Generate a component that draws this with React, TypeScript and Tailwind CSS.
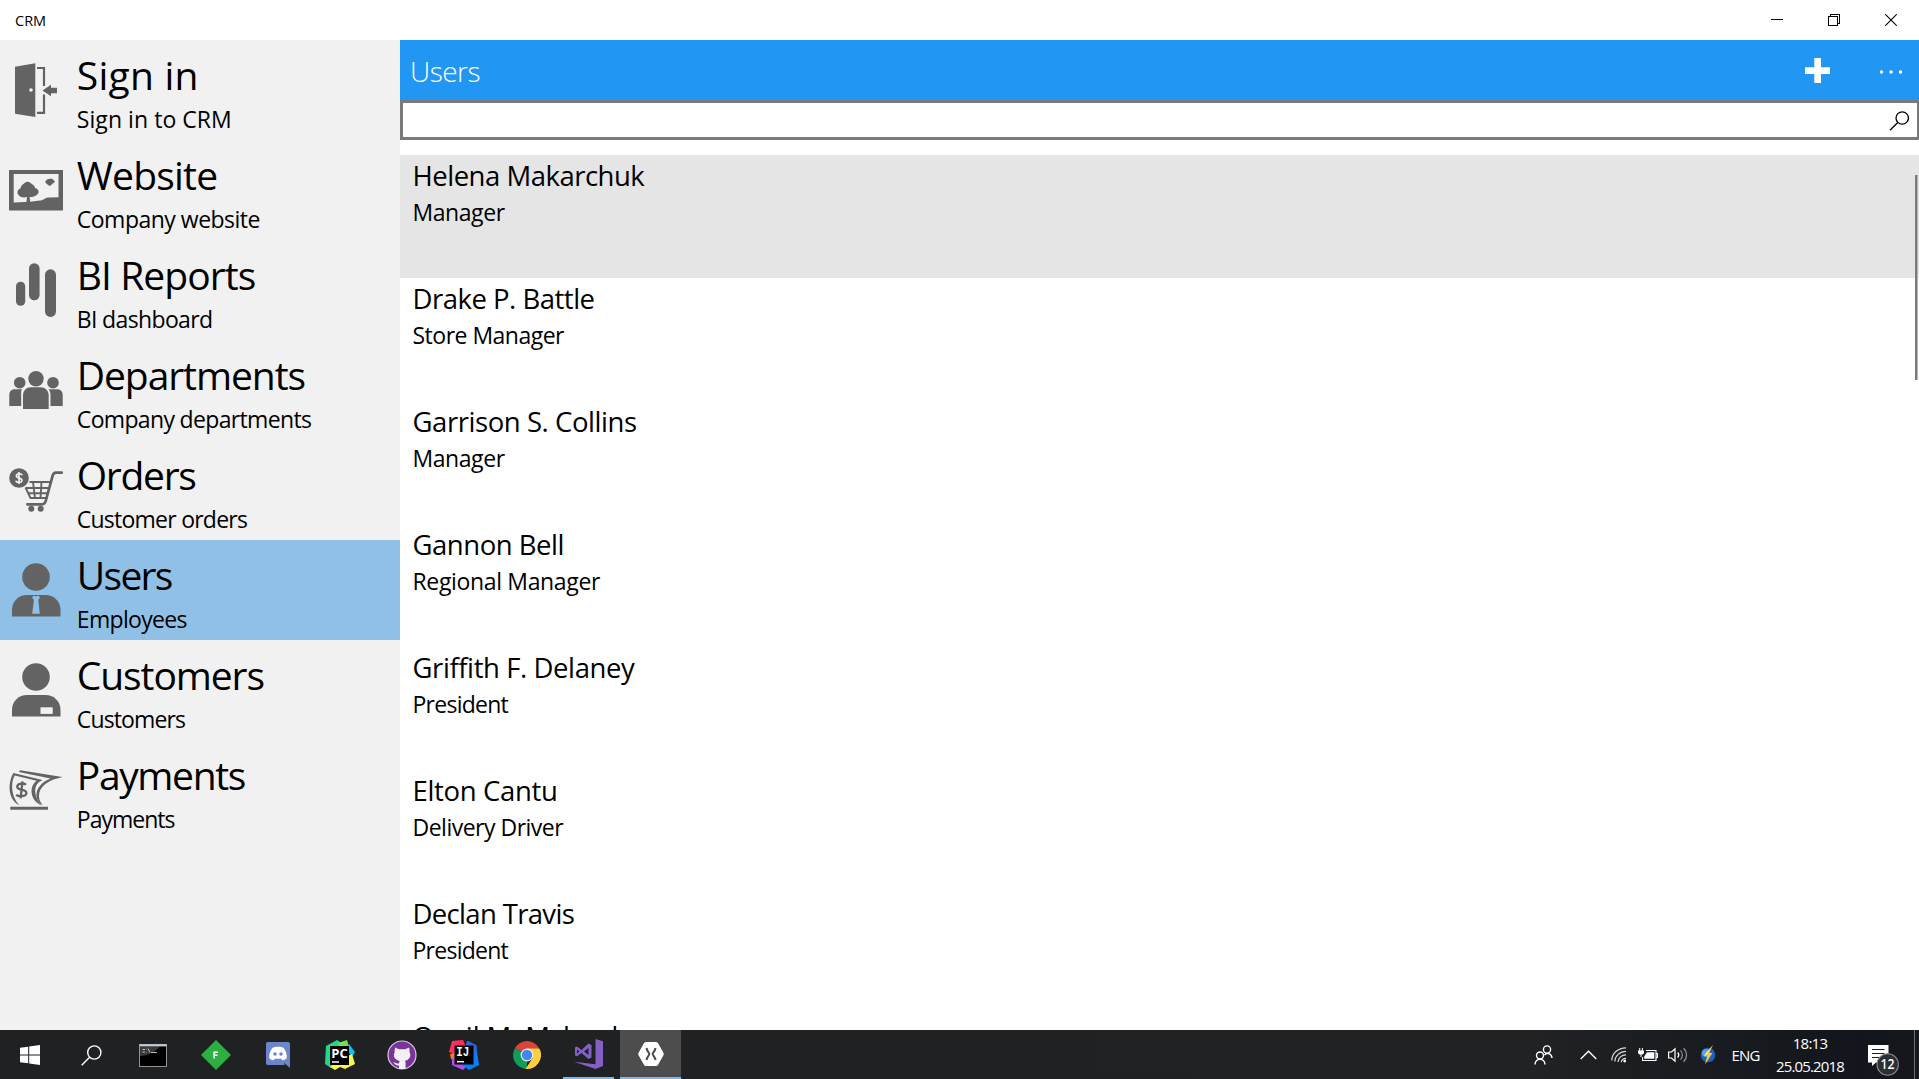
import React from 'react';

type IconProps = { children: React.ReactNode };

function NavIcon({ children }: IconProps) {
  return (
    <svg viewBox="9 23 54 54" className="mt-[23px] ml-[9px] h-[54px] w-[54px] shrink-0 fill-[#636363]">
      {children}
    </svg>
  );
}

const personHead = <circle cx="36" cy="37" r="13.8" />;
const personBody = 'M12 76.5V70C12 61 19 55 27 55H45.5C53.5 55 60.5 61 60.5 70V76.5Z';

const signIn = (
  <NavIcon>
    <path d="M15 26.8 35.3 23.3V77L15 73.8Z" />
    <circle cx="31" cy="50" r="1.8" fill="#f1f1f1" />
    <path d="M37 28H44V46M44 54.5V72.8H37" fill="none" stroke="#636363" strokeWidth="2.2" />
    <path d="M42.5 50.5 51 44.8V47.8H57V53.3H51V56.2Z" />
  </NavIcon>
);

const website = (
  <NavIcon>
    <path d="M9 30H63V70.5H9Z" />
    <path d="M13.7 34H58.5V57.3L49 57.6C45.5 57.7 45 59 42 60.3L30 61.8 13.7 62.5Z" fill="#f1f1f1" />
    <path d="M26.3 63 27 57C23.5 58.3 18.5 56.8 17.5 53.2 17 50.5 19 48.8 20.7 48.3 20.7 45 23.8 44.3 24.8 42.8 26.3 41.4 29 41.4 30.3 42.8 31.5 44.3 35 45.3 35 48 37 48.5 39 50 38.6 52.3 37.8 55.5 33 57.5 29.7 57L30.2 63Z" />
    <path d="M50 46C48 45 46 43.8 45 41.8 46.5 41 46.5 38.8 49 39 50 38.5 53 38.3 53.5 40.2 55 40.6 55.3 41.5 54 42.8 52.5 43.3 51.8 45 50 46Z" />
  </NavIcon>
);

const reports = (
  <NavIcon>
    <rect x="16" y="41.7" width="9.2" height="24" rx="4.5" />
    <rect x="29" y="23.2" width="10.6" height="37" rx="5.2" />
    <rect x="45" y="29.3" width="11" height="47.6" rx="5.4" />
  </NavIcon>
);

const departments = (
  <NavIcon>
    <circle cx="36" cy="38.7" r="7.7" />
    <circle cx="19.7" cy="42.7" r="5.8" />
    <circle cx="53" cy="42.7" r="5.8" />
    <path d="M23 69V55.5C23 50.5 26.5 47.3 31 47.3H40.5C45 47.3 48.7 50.5 48.7 55.5V69Z" />
    <path d="M9.3 66V54.5C9.5 51 12 49.3 15 49.3H22C20.8 51.5 21.2 53 21.2 56V66ZM62.7 66V54.5C62.5 51 60 49.3 57 49.3H48.5C50.3 51.5 50.5 53 50.5 56V66Z" />
  </NavIcon>
);

const orders = (
  <NavIcon>
    <circle cx="19" cy="38" r="9.8" />
    <path d="M22.3 35.2C21.6 33.4 16.6 33 16.4 35.7 16.2 38.7 22 37.2 21.9 40.5 21.7 43.2 16.5 43 15.7 40.8M19 32V44" fill="none" stroke="#f1f1f1" strokeWidth="1.7" />
    <path d="M61.8 32.6H56C54 32.6 53.2 33.8 52.7 35.5L46 60C45.3 63 44.3 64.3 42 64.3H27.3" fill="none" stroke="#636363" strokeWidth="2.7" strokeLinecap="round" />
    <path d="M29.5 42H50.5M25.5 48H49M28 53.3H47.5M30 58H46.5M25.5 47.5 30.5 58M33 42 35 58M41.5 42 40.5 58" fill="none" stroke="#636363" strokeWidth="1.9" />
    <circle cx="31.3" cy="68.8" r="3" />
    <circle cx="40.7" cy="68.8" r="3" />
  </NavIcon>
);

const users = (
  <NavIcon>
    {personHead}
    <path d={personBody} />
    <path d="M32 57.5 34 55.5 36 56.5 38.2 55.5 40 57.5 38.3 60 39.8 73.8H32.2L33.9 60Z" fill="#91c0e7" />
  </NavIcon>
);

const customers = (
  <NavIcon>
    {personHead}
    <path d={personBody} />
    <rect x="40.5" y="67.3" width="12.2" height="6.6" fill="#f1f1f1" />
  </NavIcon>
);

const payments = (
  <NavIcon>
    <path d="M10.3 66.7H48V69.7H10.3Z" />
    <path d="M13.3 33 42.5 40C36 43 34.5 48 35.5 54 36.2 59 39 63 41.5 65.5 35 62.5 31.5 57 31.5 51 31.5 46.5 33.5 43 36.5 40.8L14.8 35.6C10.8 42 10.5 56 19.5 65.3 8 59.5 7.2 44 13.3 33Z" />
    <path d="M20 30.2 62.5 37 53.5 39.5C44.5 43.5 37 49 39.5 60L42.5 65.3C32 58 35.5 44.5 50.5 38.4L19 32Z" />
    <path d="M26 44.7C24.5 43 17.3 42.7 17.2 46.8 17.2 51 26.4 48.3 26.4 53 26.2 57 18.5 56.8 16.2 54.8M22.5 41.3 20.6 58.3" fill="none" stroke="#636363" strokeWidth="2.3" />
  </NavIcon>
);

const nav = [
  { icon: signIn, title: 'Sign in', sub: 'Sign in to CRM', tt: 'tracking-[0.006em]', st: 'tracking-[0.0025em]' },
  { icon: website, title: 'Website', sub: 'Company website', tt: 'tracking-[-0.020em]', st: 'tracking-[-0.022em]' },
  { icon: reports, title: 'BI Reports', sub: 'BI dashboard', tt: 'tracking-[-0.024em]', st: 'tracking-[-0.028em]' },
  { icon: departments, title: 'Departments', sub: 'Company departments', tt: 'tracking-[-0.0275em]', st: 'tracking-[-0.0286em]' },
  { icon: orders, title: 'Orders', sub: 'Customer orders', tt: 'tracking-[-0.033em]', st: 'tracking-[-0.033em]' },
  { icon: users, title: 'Users', sub: 'Employees', tt: 'tracking-[-0.044em]', st: 'tracking-[-0.0295em]', active: true },
  { icon: customers, title: 'Customers', sub: 'Customers', tt: 'tracking-[-0.028em]', st: 'tracking-[-0.038em]' },
  { icon: payments, title: 'Payments', sub: 'Payments', tt: 'tracking-[-0.035em]', st: 'tracking-[-0.043em]' },
];

const people = [
  { name: 'Helena Makarchuk', role: 'Manager', nt: 'tracking-[-0.018em]', rt: 'tracking-[-0.019em]', active: true },
  { name: 'Drake P. Battle', role: 'Store Manager', nt: 'tracking-[-0.018em]', rt: 'tracking-[-0.022em]' },
  { name: 'Garrison S. Collins', role: 'Manager', nt: 'tracking-[-0.016em]', rt: 'tracking-[-0.019em]' },
  { name: 'Gannon Bell', role: 'Regional Manager', nt: 'tracking-[-0.017em]', rt: 'tracking-[-0.015em]' },
  { name: 'Griffith F. Delaney', role: 'President', nt: 'tracking-[-0.015em]', rt: 'tracking-[-0.032em]' },
  { name: 'Elton Cantu', role: 'Delivery Driver', nt: 'tracking-[-0.012em]', rt: 'tracking-[-0.022em]' },
  { name: 'Declan Travis', role: 'President', nt: 'tracking-[-0.024em]', rt: 'tracking-[-0.032em]' },
  { name: 'Oneil M. Mcleod', nt: 'tracking-[-0.004em]' },
];

function TitleBar() {
  return (
    <header className="flex h-10 shrink-0 items-center justify-between bg-white">
      <span className="pt-px pl-[15px] text-[14.5px] leading-5">CRM</span>
      <div className="flex h-full">
        <div className="flex w-[57px] items-center justify-center">
          <svg width="12" height="12" shapeRendering="crispEdges"><path d="M0 5H12V6H0Z" /></svg>
        </div>
        <div className="flex w-[57px] items-center justify-center">
          <svg width="12" height="12" fill="none" stroke="#000" shapeRendering="crispEdges">
            <path d="M.5 2.5H9.5V11.5H.5ZM2.5 2.5V.5H11.5V9.5H9.5" />
          </svg>
        </div>
        <div className="flex w-[57px] items-center justify-center">
          <svg width="12" height="12" fill="none" stroke="#000" strokeWidth="1.1"><path d="M.3 .3 11.7 11.7M11.7 .3 .3 11.7" /></svg>
        </div>
      </div>
    </header>
  );
}

function Sidebar() {
  return (
    <nav className="w-[400px] shrink-0 bg-[#f1f1f1]">
      {nav.map((n) => (
        <div key={n.title} className={`flex h-[100px] ${n.active ? 'bg-[#91c0e7]' : ''}`}>
          {n.icon}
          <div className="ml-[13.8px] pt-[9px] whitespace-nowrap">
            <div className={`text-[39px] leading-[52px] ${n.tt}`}>{n.title}</div>
            <div className={`mt-0.5 text-[23px] leading-8 ${n.st}`}>{n.sub}</div>
          </div>
        </div>
      ))}
    </nav>
  );
}

function UsersPage() {
  return (
    <main className="relative flex min-w-0 flex-1 flex-col overflow-hidden bg-white">
      <div className="flex h-[60px] shrink-0 items-center bg-[#2196f3] text-white">
        <h1 className="flex-1 pt-0.5 pl-2.5 text-[28px] leading-[58px] font-light tracking-[-0.018em]">Users</h1>
        <svg width="25" height="25" className="mt-px mr-[49px]" fill="#fff"><path d="M9.3 0H16V9.3H25V16H16V25H9.3V16H0V9.3H9.3Z" /></svg>
        <svg width="24" height="6" className="mt-[3px] mr-4" fill="#fff">
          <circle cx="2.5" cy="3" r="1.7" />
          <circle cx="12" cy="3" r="1.7" />
          <circle cx="21.5" cy="3" r="1.7" />
        </svg>
      </div>
      <div className="flex h-10 shrink-0 items-center justify-end border-[3px] border-r-2 border-[#7a7a7a] pr-2">
        <svg width="20" height="20" className="mt-px" fill="none" stroke="#000" strokeWidth="1.3">
          <circle cx="13.2" cy="7" r="6.2" />
          <path d="M8.8 11.5 1 19.3" />
        </svg>
      </div>
      <ul className="mt-[15px]">
        {people.map((p) => (
          <li key={p.name} className={`h-[123px] pt-[3px] pl-[12.5px] whitespace-nowrap ${p.active ? 'bg-[#e5e5e5]' : ''}`}>
            <div className={`text-[27.5px] leading-9 ${p.nt}`}>{p.name}</div>
            {p.role && <div className={`mt-0.5 text-[23px] leading-8 ${p.rt}`}>{p.role}</div>}
          </li>
        ))}
      </ul>
      <div className="absolute top-[135px] right-px h-[205px] w-[3px] border-r border-[#b5b5b5] bg-[#7a7a7a]" />
    </main>
  );
}

const taskIcons = [
  <svg width="28" height="23" viewBox="0 0 28 23">
    <rect x=".5" y=".5" width="27" height="22" fill="#000" stroke="#8f9498" />
    <path d="M1 2.5V12C9 12 17 7 21 2.5Z" fill="#3a3a3a" />
    <path d="M.5 1.3H27.5" stroke="#c3cbd3" strokeWidth="2.2" />
    <path d="M3.5 5.5H6M3.5 8H6M7.5 5.5V6M7.5 8V8.5M9 4.5 11 8.5M12 8.5H18" stroke="#ccc" strokeWidth=".9" fill="none" />
  </svg>,
  <svg width="30" height="30" viewBox="0 0 30 30">
    <path d="M15 0 30 15 15 30 0 15Z" fill="#2cb042" />
    <path d="M13.2 18.5V12.3H17M13.2 15.3H16.5" fill="none" stroke="#fff" strokeWidth="1.6" />
  </svg>,
  <svg width="24" height="26" viewBox="0 0 24 26">
    <path d="M2 0H22C23.3 0 24 .8 24 2V26L18 20.7 18.8 23H2C.7 23 0 22.3 0 21V2C0 .8 .7 0 2 0Z" fill="#6d86cb" />
    <path d="M6.5 5.8 10 4.8H14L17.5 5.8C19.8 8.5 21 12.5 20.8 16 19.5 17.5 18 18.2 16.3 18.3L15.2 16.7H8.8L7.7 18.3C6 18.2 4.5 17.5 3.2 16 3 12.5 4.2 8.5 6.5 5.8Z" fill="#fff" />
    <circle cx="9" cy="12" r="1.8" fill="#6d86cb" />
    <circle cx="15" cy="12" r="1.8" fill="#6d86cb" />
  </svg>,
  <svg width="30" height="30" viewBox="0 0 30 30">
    <path d="M1 6 12 0 18 4 15 14 6 28 0 24Z" fill="#21d789" />
    <path d="M13 3 22 0 25 10 15 12Z" fill="#6fe256" />
    <path d="M24 4 30 12 27 17 22 10Z" fill="#07c3f2" />
    <path d="M5 27 14 20 27 14 30 24 20 29 15 27 10 30Z" fill="#fcf84a" />
    <rect x="5" y="6" width="19" height="19" fill="#000" />
    <path d="M7 22H14" stroke="#fff" strokeWidth="1.5" />
    <text x="6.3" y="17.5" fill="#fff" fontSize="12.5" fontWeight="700" fontFamily="Open Sans" textLength="16.5" lengthAdjust="spacingAndGlyphs">PC</text>
  </svg>,
  <svg width="30" height="30" viewBox="0 0 30 30">
    <circle cx="15" cy="15" r="14" fill="#79349a" stroke="#d8cbe2" strokeWidth="1.2" />
    <path d="M8.2 7.5 12 9.2H18.3L22 7.5C22.8 10 22.6 11 22.5 12 25 17 21.5 20.3 17.8 20.8 18.8 22 18.6 23.5 18.6 28.5 16 29.2 14 29.2 12 28.5V25.5C9 26 8 24.5 6.2 22 9 22.5 9.5 24 12 23.3L12.5 20.8C8.5 20.2 5.3 17 7.8 12 7.5 11 7.5 10 8.2 7.5Z" fill="#f2f0f4" />
  </svg>,
  <svg width="30" height="30" viewBox="0 0 30 30">
    <path d="M3 1 14 0 17 7 8 15 0 12Z" fill="#fe315d" />
    <path d="M1 14 9 12V22L2 19Z" fill="#f97a12" />
    <path d="M3 18 12 20 18 26 14 30 3 25Z" fill="#b74af7" />
    <path d="M19 1 27 5 30 25 20 30 13 25 16 6Z" fill="#087cfa" />
    <path d="M18 1 28 6 25 16 16 8Z" fill="#3b63d8" />
    <rect x="5.5" y="5.5" width="19" height="19" fill="#000" />
    <path d="M8 21.7H15" stroke="#fff" strokeWidth="1.5" />
    <text x="7.2" y="16.3" fill="#fff" fontSize="12" fontWeight="700" fontFamily="Liberation Mono" textLength="13" lengthAdjust="spacingAndGlyphs">IJ</text>
  </svg>,
  <svg width="28" height="28" viewBox="0 0 28 28">
    <path d="M14 14 1.9 7A14 14 0 0 1 26.1 7Z" fill="#db4437" />
    <path d="M14 14V28A14 14 0 0 1 1.9 7Z" fill="#0f9d58" />
    <path d="M14 7.6H26.4A14 14 0 0 1 12.500 27.900L19.500 17.200Z" fill="#ffcd40" />
    <circle cx="14" cy="14" r="6.4" fill="#f1f1f1" />
    <circle cx="14" cy="14" r="5.2" fill="#4285f4" />
  </svg>,
  <svg width="30" height="30" viewBox="0 0 30 30">
    <path d="M21.5 0 29 2.3V27L21.5 30 0 22.8 21.5 25.3Z" fill="#865fc5" />
    <path fillRule="evenodd" d="M1 8.3 3 7.5 7.5 11 14.5 4.5 17.5 6V18.5L14.5 20 7.5 14 3 17.3 1 16.5ZM3 10.5V14.5L5.3 12.5ZM10 12.5 14.5 16V9Z" fill="#865fc5" />
  </svg>,
  <svg width="26" height="24" viewBox="0 0 26 24">
    <path d="M8.3 0H17.7C18.8 0 19.6 .5 20.2 1.5L25.3 10.5C25.9 11.5 25.9 12.5 25.3 13.5L20.2 22.5C19.6 23.5 18.8 24 17.7 24H8.3C7.2 24 6.4 23.5 5.8 22.5L.7 13.5C.1 12.5 .1 11.5 .7 10.5L5.8 1.5C6.4 .5 7.2 0 8.3 0Z" fill="#fff" />
    <path d="M8.5 6C9 9.5 11.3 10.5 11.3 12 11.3 13.5 9 14.5 8.5 18M17.5 6C17 9.5 14.7 10.5 14.7 12 14.7 13.5 17 14.5 17.500 18" fill="none" stroke="#4d4d4e" strokeWidth="2" />
  </svg>,
];

function Taskbar() {
  return (
    <footer className="flex h-[49px] shrink-0 bg-[linear-gradient(90deg,#1f2123_0%,#202224_80%,#12161c_97%,#15181d_100%)] text-white">
      <div className="flex w-[60px] items-center justify-center">
        <svg width="20" height="20" className="mt-px" fill="#fff">
          <path d="M0 2.8 8.2 1.7V9.5H0ZM9.2 1.5 20 0V9.5H9.2ZM0 10.5H8.2V18.3L0 17.2ZM9.2 10.5H20V20L9.2 18.5Z" />
        </svg>
      </div>
      <div className="flex w-[62.4px] items-center justify-center">
        <svg width="21" height="21" className="mt-px" fill="none" stroke="#fff" strokeWidth="1.4">
          <circle cx="13.3" cy="7.5" r="6.6" />
          <path d="M8.6 12.2 .7 20.2" />
        </svg>
      </div>
      {taskIcons.map((icon, i) => (
        <div key={i} className="flex w-[62.2px] justify-center">
          <div
            className={`flex h-full items-center justify-center pt-px ${
              i === 8 ? 'w-[61px] border-b-2 border-[#76b9ed] bg-[#4d4d4e]' : i === 7 ? 'w-[51px] border-b-2 border-[#76b9ed]' : 'w-full'
            }`}
          >
            {icon}
          </div>
        </div>
      ))}
      <div className="flex-1" />
      <div className="flex w-[52px] items-center justify-center">
        <svg width="19" height="20" fill="none" stroke="#fff" strokeWidth="1.4">
          <circle cx="13" cy="4.5" r="3.6" />
          <path d="M10.5 10C12.5 7.5 17.5 8 18 13" />
          <circle cx="6" cy="10.5" r="3.5" />
          <path d="M1 19.5C1.3 12.5 10.7 12.5 11 19.5" />
        </svg>
      </div>
      <div className="flex w-[38px] items-center justify-center">
        <svg width="17" height="10" fill="none" stroke="#fff" strokeWidth="1.4"><path d="M.7 9 8.5 1.2 16.3 9" /></svg>
      </div>
      <div className="flex w-6 items-center justify-center">
        <svg width="16" height="16" className="mt-px" fill="none" stroke="#d8d8d8" strokeWidth="1.2">
          <path d="M.8 13.5C.8 6.5 7 .8 15 .8M3.8 14.5C3.8 9 9 4.3 15 4.3M7 15C7.3 11 10.5 7.8 15 7.8M10.3 15.3C10.5 13 12.5 11.3 15 11.3" />
          <circle cx="13.7" cy="14" r="1.4" fill="#fff" stroke="none" />
        </svg>
      </div>
      <div className="flex w-[34px] items-center justify-center">
        <svg width="20" height="14" fill="none" stroke="#fff" strokeWidth="1.1">
          <path d="M8 2.5H18V12.5H4.6V9M18.5 5.500H19.4V9.500H18.5" />
          <path d="M9 4.2H16.300V10.800H6.2V8.500Z" fill="#fff" stroke="none" />
          <path d="M0 2.5H6V4C6 6 5 6.500 3.5 6.500V9H2.500V6.500C1 6.500 0 6 0 4ZM1.200 0H2.200V2.5H1.200ZM3.800 0H4.800V2.5H3.800Z" fill="#fff" stroke="none" />
        </svg>
      </div>
      <div className="flex w-[26px] items-center justify-center">
        <svg width="20" height="16" fill="none" strokeWidth="1.2">
          <path d="M.6 5H3.5L7 1.8V14.2L3.5 11H.6Z" stroke="#fff" />
          <path d="M9.7 5.5C11 7 11 9 9.7 10.5" stroke="#fff" />
          <path d="M12.5 3.3C15 6 15 10 12.5 12.7M15.5 1.2C19.5 5 19.5 11 15.5 14.8" stroke="#8b8b8b" />
        </svg>
      </div>
      <div className="flex w-[34px] items-center justify-center">
        <svg width="16" height="20" viewBox="0 0 16 20">
          <circle cx="8" cy="10" r="7.3" fill="#1d62b5" />
          <circle cx="6" cy="8" r="4" fill="#5da2e0" />
          <path d="M13 0 4 10.5H7.3L5 19.5 12.5 8H9Z" fill="#fcc53a" />
          <path d="M13 0 4 10.5H6L11 3Z" fill="#fde9a8" />
        </svg>
      </div>
      <div className="flex w-[41px] items-center justify-center pt-px text-[15px] tracking-[-0.060em]">ENG</div>
      <div className="flex w-[88px] flex-col items-center pt-0.5 text-[15px] leading-[23px]">
        <span className="tracking-[-0.050em]">18:13</span>
        <span className="tracking-[-0.056em]">25.05.2018</span>
      </div>
      <div className="flex w-[60px] justify-center pt-3.5">
        <svg width="32" height="34" viewBox="0 0 32 34">
          <path d="M0 1H20.5V18.5H8L4 22V18.5H0Z" fill="#fff" />
          <path d="M4 5.5H16.5M4 9.5H16.5M4 13.5H12" stroke="#1b1e22" strokeWidth="1.2" />
          <circle cx="19.7" cy="20.5" r="10.7" fill="#2d3033" stroke="#85878a" strokeWidth="1.1" />
          <text x="19.5" y="25.3" textAnchor="middle" fill="#fff" fontSize="13.5" fontWeight="600" fontFamily="Open Sans" textLength="14" lengthAdjust="spacingAndGlyphs">12</text>
        </svg>
      </div>
      <div className="mr-1 w-px bg-[#6b6d70]" />
    </footer>
  );
}

export default function App() {
  return (
    <div className="flex h-[1079px] w-[1919px] flex-col overflow-hidden bg-white font-['Open_Sans',sans-serif] text-black">
      <TitleBar />
      <div className="flex min-h-0 flex-1">
        <Sidebar />
        <UsersPage />
      </div>
      <Taskbar />
    </div>
  );
}
